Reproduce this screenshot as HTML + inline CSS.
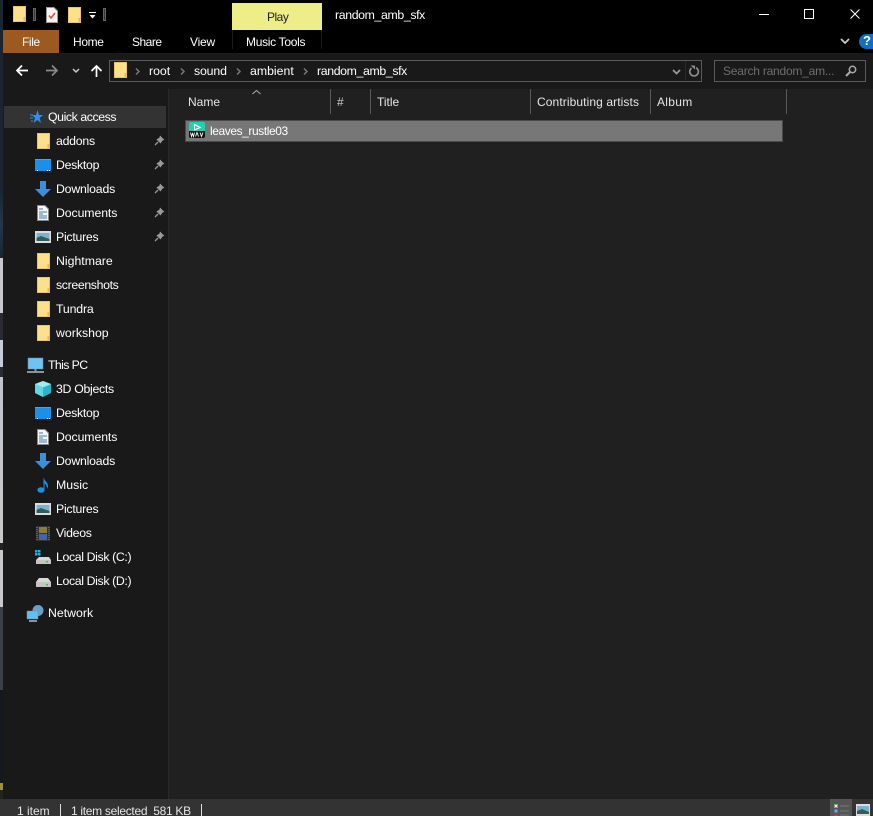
<!DOCTYPE html>
<html><head><meta charset="utf-8"><title>random_amb_sfx</title>
<style>
html,body{margin:0;padding:0;background:#191919;width:873px;height:816px;overflow:hidden}
body{position:relative;font-family:"Liberation Sans",sans-serif;font-size:12px;color:#fff}
.a{position:absolute}
.t{position:absolute;white-space:nowrap;line-height:16px;height:16px}
.n{font-size:12.3px}
svg{position:absolute;overflow:visible}
</style></head><body>
<!-- background strip -->
<div class="a" style="left:0;top:0;width:3px;height:816px;background:linear-gradient(#1a2530 0,#1a2530 190px,#20384c 225px,#1a2530 258px,#c8c8cc 258px,#c8c8cc 313px,#2a2a34 313px,#2a2a34 340px,#c4ccd8 340px,#c4ccd8 367px,#2a2a34 367px,#2a2a34 377px,#c0c4cc 377px,#c8c8c8 543px,#222 543px,#222 550px,#c8c8cc 550px,#c8c8cc 607px,#3a3f48 607px,#3a3f48 690px,#15181c 690px,#15181c 783px,#a09040 783px,#a09040 790px,#222 790px,#222 799px,#333 799px)"></div>
<div class="a" style="left:3px;top:0;width:870px;height:53px;background:#000"></div>
<div class="a" style="left:3px;top:53px;width:870px;height:746px;background:#191919"></div>
<div class="a" style="left:169px;top:89px;width:704px;height:710px;background:#202020"></div>
<div class="a" style="left:168px;top:89px;width:1px;height:710px;background:#2a2a2a"></div>
<div class="a" style="left:3px;top:799px;width:870px;height:17px;background:#333"></div>

<!-- QAT icons -->
<svg style="left:13px;top:6px" width="13" height="16"><path d="M.5.5H12.500V15.500H.5Z" fill="#fde08a" stroke="#eac468"/><rect x="10.500" y="11" width="2" height="4" fill="#eab84c"/></svg>
<div class="a" style="left:33px;top:8px;width:3px;height:13px;background:#333;outline:1px solid #666;outline-offset:-1px"></div>
<svg style="left:46px;top:7px" width="12" height="16"><path d="M.5.5H8L11.500 4V15.500H.5Z" fill="#f3f3f3" stroke="#999"/><path d="M3 8.500L5 11L9 6" fill="none" stroke="#e0502a" stroke-width="1.500"/></svg>
<svg style="left:68px;top:7px" width="13" height="16"><path d="M.5.5H12.500V15.500H.5Z" fill="#fde08a" stroke="#eac468"/><rect x="10.500" y="11" width="2" height="4" fill="#eab84c"/></svg>
<svg style="left:89px;top:12px" width="8" height="8"><path d="M0 .5H7" stroke="#fff"/><path d="M.5 3H6.500L3.500 6.500Z" fill="#fff"/></svg>
<div class="a" style="left:103px;top:8px;width:3px;height:13px;background:#333;outline:1px solid #666;outline-offset:-1px"></div>

<!-- Play tab & title -->
<div class="a" style="left:232px;top:3px;width:90px;height:27px;background:#eeee88"></div>
<div class="t" style="left:267px;top:9px;color:#222;letter-spacing:-.5px">Play</div>
<div class="t n" style="left:335px;top:7px;letter-spacing:-.36px">random_amb_sfx</div>
<div class="a" style="left:232px;top:30px;width:1px;height:19px;background:#1a1a1a"></div>
<div class="a" style="left:321px;top:30px;width:1px;height:19px;background:#1a1a1a"></div>

<!-- Window controls -->
<div class="a" style="left:759px;top:14px;width:10px;height:1px;background:#fff"></div>
<div class="a" style="left:804px;top:9px;width:8px;height:8px;border:1px solid #fff"></div>
<svg style="left:850px;top:9px" width="10" height="10"><path d="M.5.5L9.500 9.500M9.500.5L.5 9.500" stroke="#fff" stroke-width="1"/></svg>
<svg style="left:840px;top:38px" width="10" height="7"><path d="M1 1L5 5L9 1" fill="none" stroke="#ccc" stroke-width="1.700"/></svg>
<div class="a" style="left:859px;top:34px;width:14px;height:15px;border-radius:8px 0 0 8px;background:#0f6fc6"></div>
<div class="t" style="left:863px;top:33px;font-weight:bold;font-size:13px">?</div>

<!-- Tabs -->
<div class="a" style="left:3px;top:30px;width:56px;height:23px;background:#9d5a20"></div>
<div class="t" style="left:22px;top:34px;letter-spacing:-.4px">File</div>
<div class="t" style="left:73px;top:34px;letter-spacing:-.35px">Home</div>
<div class="t" style="left:132px;top:34px;letter-spacing:-.5px">Share</div>
<div class="t" style="left:190px;top:34px;letter-spacing:-.2px">View</div>
<div class="t" style="left:246px;top:34px;letter-spacing:-.3px">Music Tools</div>

<!-- Nav arrows -->
<svg style="left:15px;top:64px" width="14" height="13"><path d="M13 6.500H2M7 1.500L2 6.500L7 11.500" fill="none" stroke="#fff" stroke-width="1.700"/></svg>
<svg style="left:45px;top:64px" width="14" height="13"><path d="M1 6.500H12M7 1.500L12 6.500L7 11.500" fill="none" stroke="#8a8a8a" stroke-width="1.700"/></svg>
<svg style="left:72px;top:68px" width="8" height="6"><path d="M1 1L4 4L7 1" fill="none" stroke="#ccc" stroke-width="1.500"/></svg>
<svg style="left:90px;top:64px" width="13" height="14"><path d="M6.500 13V2M1.500 7L6.500 2L11.500 7" fill="none" stroke="#fff" stroke-width="1.700"/></svg>

<!-- Address bar -->
<div class="a" style="left:109px;top:60px;width:591px;height:20px;border:1px solid #5a5a5a"></div>
<div class="a" style="left:685px;top:61px;width:1px;height:19px;background:#2a2a2a"></div>
<svg style="left:114px;top:62px" width="13" height="16"><path d="M.5.5H12.500V15.500H.5Z" fill="#fde08a" stroke="#eac468"/><rect x="10.500" y="11" width="2" height="4" fill="#eab84c"/></svg>
<svg style="left:135px;top:68px" width="5" height="7"><path d="M1 .5L4 3.500L1 6.500" fill="none" stroke="#777" stroke-width="1.500"/></svg>
<div class="t n" style="left:149px;top:63px">root</div>
<svg style="left:180px;top:68px" width="5" height="7"><path d="M1 .5L4 3.500L1 6.500" fill="none" stroke="#777" stroke-width="1.500"/></svg>
<div class="t n" style="left:194px;top:63px;letter-spacing:-.15px">sound</div>
<svg style="left:236px;top:68px" width="5" height="7"><path d="M1 .5L4 3.500L1 6.500" fill="none" stroke="#777" stroke-width="1.500"/></svg>
<div class="t n" style="left:250px;top:63px">ambient</div>
<svg style="left:303px;top:68px" width="5" height="7"><path d="M1 .5L4 3.500L1 6.500" fill="none" stroke="#777" stroke-width="1.500"/></svg>
<div class="t n" style="left:317px;top:63px;letter-spacing:-.36px">random_amb_sfx</div>
<svg style="left:672px;top:69px" width="9" height="7"><path d="M1 1L4.500 4.500L8 1" fill="none" stroke="#999" stroke-width="1.800"/></svg>
<svg style="left:688px;top:65px" width="11" height="12"><path d="M3.500 3.200A4.300 4.300 0 1 0 8 2.800" fill="none" stroke="#8c8c8c" stroke-width="1.700"/><path d="M2.500 0.500H7V4.500Z" fill="#8c8c8c"/></svg>

<!-- Search -->
<div class="a" style="left:714px;top:60px;width:150px;height:20px;border:1px solid #5a5a5a"></div>
<div class="t" style="left:723px;top:63px;color:#6e6e6e;letter-spacing:-.22px">Search random_am...</div>
<svg style="left:845px;top:65px" width="12" height="12"><circle cx="7.500" cy="4.500" r="3.200" fill="none" stroke="#aaa" stroke-width="1.500"/><path d="M5 7L1 11" stroke="#aaa" stroke-width="2"/></svg>

<!-- Column headers -->
<svg style="left:252px;top:90px" width="9" height="5"><path d="M.5 4L4.500 .5L8.500 4" fill="none" stroke="#aaa"/></svg>
<div class="t" style="left:188px;top:94px;color:#e6e6e6">Name</div>
<div class="a" style="left:330px;top:89px;width:1px;height:25px;background:#5a5a5a"></div>
<div class="t" style="left:337px;top:94px;color:#ccc">#</div>
<div class="a" style="left:370px;top:89px;width:1px;height:25px;background:#5a5a5a"></div>
<div class="t" style="left:377px;top:94px;color:#e6e6e6">Title</div>
<div class="a" style="left:530px;top:89px;width:1px;height:25px;background:#5a5a5a"></div>
<div class="t" style="left:537px;top:94px;color:#e6e6e6;letter-spacing:.1px">Contributing artists</div>
<div class="a" style="left:650px;top:89px;width:1px;height:25px;background:#5a5a5a"></div>
<div class="t" style="left:657px;top:94px;color:#e6e6e6;letter-spacing:.3px">Album</div>
<div class="a" style="left:786px;top:89px;width:1px;height:25px;background:#5a5a5a"></div>

<!-- Selected row -->
<div class="a" style="left:185px;top:120px;width:596px;height:20px;background:#777;border:1px solid #4a4a4a"></div>
<svg style="left:189px;top:122px" width="16" height="16"><path d="M2 0H14Q16 0 16 2V9H0V2Q0 0 2 0Z" fill="#22d0b0"/><path d="M5.500 2.500L11 5.500L5.500 8Z" fill="none" stroke="#fff" stroke-width="1.200"/><path d="M0 9H16V14Q16 16 14 16H2Q0 16 0 14Z" fill="#111"/><path d="M1.500 10.500L2.500 14.500L3.500 11.500L4.500 14.500L5.500 10.500M6.500 14.500L8 10.500L9.500 14.500M11 10.500L12.500 14.500L14 10.500" fill="none" stroke="#fff" stroke-width=".9"/></svg>
<div class="t" style="left:210px;top:123px;letter-spacing:-.42px">leaves_rustle03</div>

<!-- Sidebar -->
<div class="a" style="left:4px;top:106px;width:162px;height:22px;background:#333"></div>
<svg style="left:30px;top:110px" width="13" height="14"><path d="M7.500 0L9 5H13L9.700 8L11 13L7.500 10L3.500 13L5 8L2 5H6Z" fill="#2f8fe8"/><path d="M0 5H3M0 8H3M1 11H3" stroke="#2f8fe8"/></svg>
<div class="t n" style="left:48px;top:109px;letter-spacing:-.42px">Quick access</div>

<svg style="left:37px;top:133px" width="13" height="16"><path d="M.5.5H12.500V15.500H.5Z" fill="#fde08a" stroke="#eac468"/><rect x="10.500" y="11" width="2" height="4" fill="#eab84c"/></svg>
<div class="t n" style="left:56px;top:133px;letter-spacing:-.25px">addons</div>
<svg style="left:154px;top:135px" width="11" height="11"><path d="M6 .5L10.500 5L8.500 5.500L6.500 8.500L2.500 4.500L5.500 2.500Z" fill="#9a9a9a"/><path d="M4 7L1 10" stroke="#9a9a9a" stroke-width="1.300"/></svg>

<svg style="left:35px;top:159px" width="16" height="12"><rect width="16" height="12" fill="#1c8fe8"/><path d="M0 0H16V1H0Z" fill="#3aa8f5"/><path d="M2 11.500h1M12 11.500h1M14 11.500h1" stroke="#fff"/></svg>
<div class="t n" style="left:56px;top:157px;letter-spacing:-.28px">Desktop</div>
<svg style="left:154px;top:159px" width="11" height="11"><path d="M6 .5L10.500 5L8.500 5.500L6.500 8.500L2.500 4.500L5.500 2.500Z" fill="#9a9a9a"/><path d="M4 7L1 10" stroke="#9a9a9a" stroke-width="1.300"/></svg>

<svg style="left:35px;top:181px" width="16" height="16"><path d="M5 0H11V8H16L8 16L0 8H5Z" fill="#3b8fde"/></svg>
<div class="t n" style="left:56px;top:181px;letter-spacing:-.2px">Downloads</div>
<svg style="left:154px;top:183px" width="11" height="11"><path d="M6 .5L10.500 5L8.500 5.500L6.500 8.500L2.500 4.500L5.500 2.500Z" fill="#9a9a9a"/><path d="M4 7L1 10" stroke="#9a9a9a" stroke-width="1.300"/></svg>

<svg style="left:37px;top:205px" width="12" height="16"><path d="M.5.5H8L11.500 4V15.500H.5Z" fill="#f5f5f5" stroke="#888"/><path d="M2 4H6M2 7H10M2 9H6M2 11H10M2 13H10" stroke="#3b7fb8"/></svg>
<div class="t n" style="left:56px;top:205px;letter-spacing:-.1px">Documents</div>
<svg style="left:154px;top:207px" width="11" height="11"><path d="M6 .5L10.500 5L8.500 5.500L6.500 8.500L2.500 4.500L5.500 2.500Z" fill="#9a9a9a"/><path d="M4 7L1 10" stroke="#9a9a9a" stroke-width="1.300"/></svg>

<svg style="left:35px;top:231px" width="16" height="12"><rect width="16" height="12" fill="#ddd"/><rect x="1.500" y="2" width="13" height="8" fill="#7fb0cf"/><path d="M1.500 7L6 5L14.500 8V10H1.500Z" fill="#2f5f5a"/></svg>
<div class="t n" style="left:56px;top:229px;letter-spacing:-.25px">Pictures</div>
<svg style="left:154px;top:231px" width="11" height="11"><path d="M6 .5L10.500 5L8.500 5.500L6.500 8.500L2.500 4.500L5.500 2.500Z" fill="#9a9a9a"/><path d="M4 7L1 10" stroke="#9a9a9a" stroke-width="1.300"/></svg>

<svg style="left:37px;top:253px" width="13" height="16"><path d="M.5.5H12.500V15.500H.5Z" fill="#fde08a" stroke="#eac468"/><rect x="10.500" y="11" width="2" height="4" fill="#eab84c"/></svg>
<div class="t n" style="left:56px;top:253px">Nightmare</div>
<svg style="left:37px;top:277px" width="13" height="16"><path d="M.5.5H12.500V15.500H.5Z" fill="#fde08a" stroke="#eac468"/><rect x="10.500" y="11" width="2" height="4" fill="#eab84c"/></svg>
<div class="t n" style="left:56px;top:277px;letter-spacing:-.35px">screenshots</div>
<svg style="left:37px;top:301px" width="13" height="16"><path d="M.5.5H12.500V15.500H.5Z" fill="#fde08a" stroke="#eac468"/><rect x="10.500" y="11" width="2" height="4" fill="#eab84c"/></svg>
<div class="t n" style="left:56px;top:301px;letter-spacing:-.15px">Tundra</div>
<svg style="left:37px;top:325px" width="13" height="16"><path d="M.5.5H12.500V15.500H.5Z" fill="#fde08a" stroke="#eac468"/><rect x="10.500" y="11" width="2" height="4" fill="#eab84c"/></svg>
<div class="t n" style="left:56px;top:325px">workshop</div>

<svg style="left:27px;top:358px" width="17" height="15"><rect x="1" y="0" width="15" height="11" fill="#6cc4f5" stroke="#888" stroke-width=".5"/><path d="M0 14H17" stroke="#bbb" stroke-width="1.500"/><path d="M8.500 11V13" stroke="#999" stroke-width="2"/></svg>
<div class="t n" style="left:48px;top:357px;letter-spacing:-.6px">This PC</div>

<svg style="left:35px;top:381px" width="16" height="16"><path d="M8 0L16 3V12L8 16L0 12V3Z" fill="#2bb5c8"/><path d="M8 0L16 3L8 6.500L0 3Z" fill="#a2ecf2"/><path d="M0 3L8 6.500V16L0 12Z" fill="#5fd8e0"/></svg>
<div class="t n" style="left:56px;top:381px;letter-spacing:-.3px">3D Objects</div>
<svg style="left:35px;top:407px" width="16" height="12"><rect width="16" height="12" fill="#1c8fe8"/><path d="M0 0H16V1H0Z" fill="#3aa8f5"/><path d="M2 11.500h1M12 11.500h1M14 11.500h1" stroke="#fff"/></svg>
<div class="t n" style="left:56px;top:405px;letter-spacing:-.28px">Desktop</div>
<svg style="left:37px;top:429px" width="12" height="16"><path d="M.5.5H8L11.500 4V15.500H.5Z" fill="#f5f5f5" stroke="#888"/><path d="M2 4H6M2 7H10M2 9H6M2 11H10M2 13H10" stroke="#3b7fb8"/></svg>
<div class="t n" style="left:56px;top:429px;letter-spacing:-.1px">Documents</div>
<svg style="left:35px;top:453px" width="16" height="16"><path d="M5 0H11V8H16L8 16L0 8H5Z" fill="#3b8fde"/></svg>
<div class="t n" style="left:56px;top:453px;letter-spacing:-.2px">Downloads</div>
<svg style="left:37px;top:477px" width="12" height="16"><ellipse cx="4" cy="13" rx="3.600" ry="2.800" fill="#1a8fe8"/><path d="M6.500 13V0C7 4 11 5 11 9C11 10 10.600 11 10 12C10.200 9 8.500 7 7.500 6.500V13Z" fill="#1a8fe8"/></svg>
<div class="t n" style="left:56px;top:477px">Music</div>
<svg style="left:35px;top:503px" width="16" height="12"><rect width="16" height="12" fill="#ddd"/><rect x="1.500" y="2" width="13" height="8" fill="#7fb0cf"/><path d="M1.500 7L6 5L14.500 8V10H1.500Z" fill="#2f5f5a"/></svg>
<div class="t n" style="left:56px;top:501px;letter-spacing:-.25px">Pictures</div>
<svg style="left:36px;top:526px" width="14" height="15"><rect width="14" height="15" fill="#333"/><rect x="3" y="1" width="8" height="6" fill="#8f7a3a"/><rect x="3" y="8" width="8" height="6" fill="#3f68a8"/><path d="M1 1V14M13 1V14" stroke="#888" stroke-dasharray="1 1"/></svg>
<div class="t n" style="left:56px;top:525px;letter-spacing:-.3px">Videos</div>
<svg style="left:35px;top:550px" width="16" height="14"><path d="M0 0h2.500v2.500h-2.500zM3 0h2.500v2.500h-2.500zM0 3h2.500v2.500h-2.500zM3 3h2.500v2.500h-2.500z" fill="#1bb0f0"/><path d="M4 7H14L16 10V14H1V10Z" fill="#d8d8d8"/><rect x="1" y="10" width="15" height="4" fill="#c4c4c4"/><rect x="11" y="11" width="2" height="1.500" fill="#3c3"/></svg>
<div class="t n" style="left:56px;top:549px;letter-spacing:-.36px">Local Disk (C:)</div>
<svg style="left:35px;top:574px" width="16" height="14"><path d="M4 4H13L16 8V13H1V8Z" fill="#d8d8d8"/><rect x="1" y="8" width="15" height="5" fill="#c4c4c4"/><rect x="11" y="10" width="2" height="1.500" fill="#3c3"/></svg>
<div class="t n" style="left:56px;top:573px;letter-spacing:-.36px">Local Disk (D:)</div>

<svg style="left:27px;top:605px" width="17" height="17"><circle cx="11" cy="5.500" r="5.500" fill="#6a9fc8"/><rect x="0" y="6" width="11" height="8" fill="#5fc0f2" stroke="#888" stroke-width=".5"/><path d="M2 16H10" stroke="#bbb" stroke-width="1.500"/></svg>
<div class="t n" style="left:48px;top:605px">Network</div>

<!-- Status bar -->
<div class="t" style="left:17px;top:803px;color:#e6e6e6">1 item</div>
<div class="a" style="left:60px;top:804px;width:1px;height:12px;background:#ddd"></div>
<div class="t" style="left:71px;top:803px;color:#e6e6e6;letter-spacing:-.3px">1 item selected&nbsp; 581 KB</div>
<div class="a" style="left:201px;top:804px;width:1px;height:12px;background:#ddd"></div>
<div class="a" style="left:830px;top:799px;width:22px;height:17px;background:#555"></div>
<svg style="left:834px;top:804px" width="16" height="12"><rect x=".5" y=".5" width="3" height="3" fill="#eee" stroke="#7a7"/><rect x=".5" y="5.500" width="3" height="3" fill="#6af"/><rect x=".5" y="10.500" width="3" height="1.500" fill="#e33"/><path d="M6 2H15M6 7H15M6 11H15" stroke="#777"/></svg>
<svg style="left:856px;top:804px" width="14" height="12"><rect width="14" height="12" fill="#ddd"/><rect x="1" y="2" width="12" height="8" fill="#7fb0cf"/><path d="M1 7L6 5L13 8V10H1Z" fill="#2f5f5a"/></svg>
</body></html>
